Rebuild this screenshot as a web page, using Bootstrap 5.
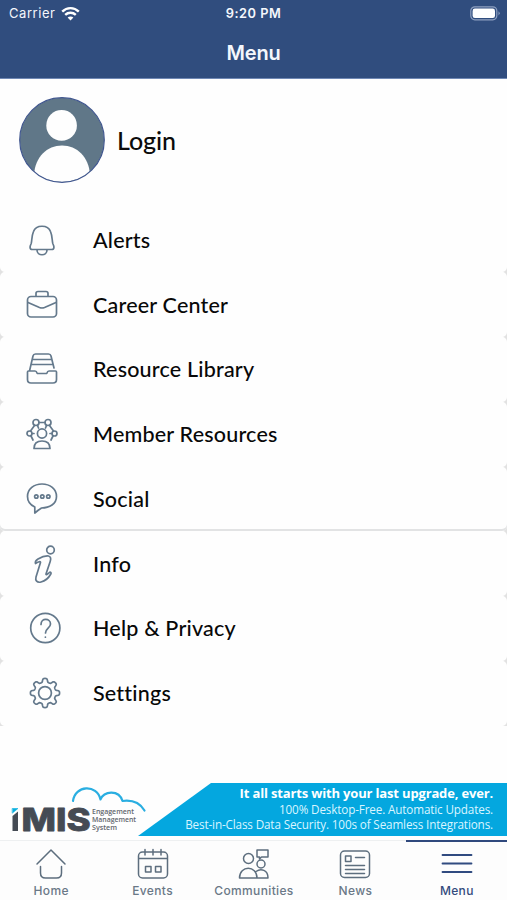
<!DOCTYPE html>
<html lang="en">
<head>
<meta charset="utf-8">
<meta name="viewport" content="width=device-width, initial-scale=1">
<title>Menu</title>
<link rel="stylesheet" href="https://cdn.jsdelivr.net/npm/bootstrap@5.3.0/dist/css/bootstrap.min.css">
<style>
body{font-family:Inter,"Liberation Sans",sans-serif;width:507px;height:900px;overflow:hidden;background:#fefefe;color:#0b0b0b}
svg{display:block;flex:none;fill:none;stroke-linecap:round;stroke-linejoin:round}
.app-head{height:79px;background:#304d7e;border-bottom:1px solid #6f88b4;color:#f4f7fc}
.status-row{height:27px;font-size:13px;padding:0 7px 0 9px;line-height:27px}
.side{width:150px}
.carrier{letter-spacing:.55px}
.wifi{margin-left:6px}
.clock{font-weight:600;font-size:12.8px;letter-spacing:.5px;padding-right:2px}
.head-title{font-size:20px;font-weight:600;line-height:52px;height:51px;letter-spacing:-.2px}
.profile{height:128.500px;padding:18px 0 0 19px}
.login-name{font:500 25px/30px Lato,sans-serif;margin:28px 0 0 12px;letter-spacing:-.1px}
.menu-row{height:64.75px;padding-left:22px;border-radius:5px;background:#fefefe;font:500 21.500px/28px Lato,sans-serif;letter-spacing:.2px;color:#080808}
.menu-wrap{background:linear-gradient(90deg,#e2e2e2 0 2px,#fefefe 6px calc(100% - 6px),#e2e2e2 calc(100% - 2px))}
.menu-row:first-child{border-top-left-radius:0;border-top-right-radius:0}
.split{box-shadow:inset 0 -2px #e2e3e4}
.ico{width:40px;height:40px;margin-right:31px;stroke:#64798c;stroke-width:1.7}
.banner{height:53px;margin-top:57.500px}
.brand{width:138px;height:53px}
.promo{flex:1;background:#04a7df;clip-path:polygon(73px 0,100% 0,100% 100%,0 100%);color:#fff;font-family:"Open Sans",sans-serif;text-align:right;padding:3px 14px 0 0;white-space:nowrap}
.promo div{height:15.500px;line-height:15px;font-size:11.700px;letter-spacing:-.14px;color:#d9f5ff}
.promo div:first-child{font-size:13px;letter-spacing:-.16px;font-weight:700;color:#fff}
.tabs{height:60px;margin-top:4px;border-top:1px solid #eef0f1;background:#fdfdfd}
.tabs a{flex:1 1 0;height:60px;padding:5px 0 0 1px;border-top:2px solid transparent;margin-top:-1px;color:#6a7887;text-decoration:none;font-size:12px;font-weight:500;letter-spacing:.35px;line-height:15px}
.tabs a.active{border-color:#30497d;color:#344b7d}
.tabs svg{width:34px;height:34px;stroke:#5d6e7e;stroke-width:1.5;margin-bottom:2px}
.tabs a.active svg{stroke:#304b80}
</style>
</head>
<body>
<header class="app-head">
 <div class="status-row d-flex justify-content-between align-items-center">
  <div class="side d-flex align-items-center"><span class="carrier">Carrier</span>
   <svg class="wifi" width="19" height="16" viewBox="0 0 19 16" stroke="#fff" stroke-width="2.4"><path stroke-linecap="butt" d="M1.2 5.600C6 .9 13 .9 17.800 5.600M4.200 8.800c3-2.800 7.600-2.800 10.600 0"/><path d="M9.500 14.400 6.600 11.500c1.600-1.400 4.200-1.400 5.800 0z" fill="#fff" stroke="none"/></svg>
  </div>
  <div class="clock">9:20 PM</div>
  <div class="side d-flex justify-content-end"><svg width="31" height="15" viewBox="0 0 31 15"><rect x="1.800" y=".8" width="26" height="13" rx="4" stroke="#8ea0c0" stroke-width="1.2"/><rect x="3.600" y="2.600" width="22.400" height="9.400" rx="2.300" fill="#fff"/><path d="M29.500 5.200q2.400 2.100 0 4.200z" fill="#8ea0c0"/></svg></div>
 </div>
 <div class="head-title text-center">Menu</div>
</header>
<main>
 <section class="profile d-flex align-items-start">
  <svg width="86" height="86" viewBox="0 0 86 86"><defs><clipPath id="face"><circle cx="43" cy="43" r="42"/></clipPath></defs><circle cx="43" cy="43" r="42.200" fill="#607788"/><g clip-path="url(#face)" fill="#fefefe"><circle cx="42.600" cy="28.400" r="15.300"/><path d="M15 78C16 60 28 48.500 43 48.500S70 60 71 78V90H15z"/></g><circle cx="43" cy="43" r="42.300" stroke="#41578f" stroke-width="1.200"/></svg>
  <div class="login-name">Login</div>
 </section>
 <nav class="menu-wrap">
  <div class="menu-row d-flex align-items-center"><svg class="ico" viewBox="0 0 40 40"><path d="M10.500 29.500C7 29.500 8 26 9.200 23.500 10 21 9.500 16 11.500 11.500 14 4.500 26 4.500 28.500 11.500 30.500 16 30 21 30.800 23.500 32 26 33 29.500 29.500 29.500zM15 30c0 6.300 10 6.300 10 0"/></svg><span>Alerts</span></div>
  <div class="menu-row d-flex align-items-center"><svg class="ico" viewBox="0 0 40 40"><rect x="5.500" y="11.500" width="29" height="20.500" rx="3.500"/><path d="M14 11V8.500q0-2 2-2h8q2 0 2 2V11M6 17.500l11.500 5q2.500 1 5 0L34 17.500"/></svg><span>Career Center</span></div>
  <div class="menu-row d-flex align-items-center"><svg class="ico" viewBox="0 0 40 40"><path d="M7.500 22 11 7q.5-2 2.500-2h13q2 0 2.500 2l3 12M10.500 10.500h19M9 15.500h22M5.500 26v-3q0-1 1-1H13q1.500 0 2 2l.5.500h9l.5-.5q.5-2 2-2h6.500q1 0 1 1v7.500q0 3.500-3.500 3.500H9q-3.500 0-3.500-3.500z"/></svg><span>Resource Library</span></div>
  <div class="menu-row d-flex align-items-center"><svg class="ico" viewBox="0 0 40 40"><circle cx="14" cy="8.500" r="3"/><circle cx="26" cy="8.500" r="3"/><circle cx="7.500" cy="19.500" r="2.500"/><circle cx="32.500" cy="19.500" r="2.500"/><circle cx="20" cy="19.500" r="4.600"/><path d="M17 8.500h6M12.500 11.500l-4 5.500M27.500 11.500l4 5.500M15.500 11.500l1 2.500M24.500 11.500l-1 2.500M10 19.500h2M28 19.500h2M9 22l2 4M31 22l-2 4M12 34.500q0-7.500 8-7.500t8 7.500z"/></svg><span>Member Resources</span></div>
  <div class="menu-row split d-flex align-items-center"><svg class="ico" viewBox="0 0 40 40"><path d="M12.800 34V28C8.500 26 5.500 22 5.500 17.500c0-7.500 6.500-12.500 14.500-12.500S34.500 10 34.500 17.500c0 7.500-7 11.500-15 11.500Q17 30.500 12.800 34z"/><circle cx="14.300" cy="17.500" r="1.700"/><circle cx="20.300" cy="17.500" r="1.700"/><circle cx="26.300" cy="17.500" r="1.700"/></svg><span>Social</span></div>
  <div class="menu-row d-flex align-items-center"><svg class="ico" viewBox="0 0 40 40"><circle cx="28.500" cy="6" r="3.800"/><path d="M16 15q6-3.500 10.500-3c2.500.5 2.500 3 1.700 5.500L24 30q-.3 2 4-2 1.600.5.800 2-3.500 6.500-9.800 8c-4 1-6-1.500-5-5L18.500 18.500q0-2-5 1-.8-2.500 2.500-4.500z"/></svg><span>Info</span></div>
  <div class="menu-row d-flex align-items-center"><svg class="ico" viewBox="0 0 40 40"><circle cx="23.300" cy="20" r="14.600"/><path d="M19 16.500c0-7 9.500-6.500 9.500-.5 0 4-5 4.500-5 9M23.400 29v.2"/></svg><span>Help &amp; Privacy</span></div>
  <div class="menu-row d-flex align-items-center"><svg class="ico" viewBox="0 0 40 40"><circle cx="23" cy="20" r="6.400"/><path id="cog"/></svg><span>Settings</span></div>
 </nav>
 <section class="banner d-flex">
  <svg class="brand" viewBox="0 0 138 53" overflow="visible"><path d="M73 18C75 2 97 1 100.500 16.500 103 8 119 6 122.500 18q15-2 22 9.500" stroke="#2aaee1" stroke-width="2.200"/><path d="M12.500 25.500H18l-5.500 4.500z" fill="#0ab0df" stroke="#0ab0df" stroke-width=".6"/><path d="M12.500 33 18 28.500V48h-5.500z" fill="#454b54"/><text x="21.500" y="48" textLength="69" lengthAdjust="spacingAndGlyphs" font-family="Inter,sans-serif" font-weight="800" font-size="31" fill="#454b54" stroke="#454b54" stroke-width=".8">MIS</text><g font-family="Open Sans,sans-serif" font-size="7" font-weight="600" fill="#62666d"><text x="92" y="31" textLength="42" lengthAdjust="spacingAndGlyphs">Engagement</text><text x="92" y="39" textLength="44" lengthAdjust="spacingAndGlyphs">Management</text><text x="92" y="47" textLength="25" lengthAdjust="spacingAndGlyphs">System</text></g></svg>
  <div class="promo"><div>It all starts with your last upgrade, ever.</div><div>100% Desktop-Free. Automatic Updates.</div><div>Best-in-Class Data Security. 100s of Seamless Integrations.</div></div>
 </section>
</main>
<footer class="tabs d-flex">
 <a href="#" class="d-flex flex-column align-items-center"><svg viewBox="0 0 34 34"><path d="M3 17 17 3l14 14M6.500 19.500V26q0 5 5 5h11q5 0 5-5v-6.500"/></svg>Home</a>
 <a href="#" class="d-flex flex-column align-items-center"><svg viewBox="0 0 34 34"><rect x="2.500" y="5" width="29" height="26" rx="4"/><path d="M3 11.500h28M9 2.500V8M17 2.500V8M25 2.500V8M9.500 19.500h5.500V25H9.500zM19.500 19.500H25V25h-5.500z"/></svg>Events</a>
 <a href="#" class="d-flex flex-column align-items-center"><svg viewBox="0 0 34 34"><circle cx="11.500" cy="11.500" r="5"/><circle cx="24" cy="17" r="4"/><path d="M2.500 31c0-13 17.500-13 17.500 0zM19 24.500c5-3.500 12-1.500 12 6.500H20M20 3h11v7h-6.500l-2 2v-2H20z"/></svg>Communities</a>
 <a href="#" class="d-flex flex-column align-items-center"><svg viewBox="0 0 34 34"><rect x="2.500" y="4" width="29" height="26.500" rx="4"/><path d="M7.500 9H13v5.500H7.500zM17.500 10.500h9M7.500 18.500h19M7.500 22.500h19M7.500 26.500h19"/></svg>News</a>
 <a href="#" class="active d-flex flex-column align-items-center"><svg viewBox="0 0 34 34"><path stroke-width="1.800" d="M2.500 8h29M2.500 16.500h29M2.500 25h29"/></svg>Menu</a>
</footer>
<script src="https://cdn.jsdelivr.net/npm/bootstrap@5.3.0/dist/js/bootstrap.bundle.min.js"></script>
<script>
// Gear outline: eight rounded teeth around a circular hub
let d = '';
for (let i = 0; i <= 160; i++) {
  const t = i / 160 * Math.PI * 2;
  const r = 12.7 + 1.9 * Math.tanh(2.2 * Math.cos(8 * t));
  d += (i ? 'L' : 'M') + (23 + r * Math.sin(t)).toFixed(2) + ' ' + (20 - r * Math.cos(t)).toFixed(2);
}
document.getElementById('cog').setAttribute('d', d + 'z');
</script>
</body>
</html>
